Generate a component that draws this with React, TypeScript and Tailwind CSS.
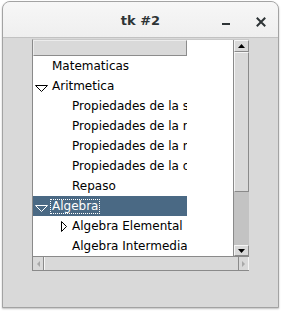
import React from "react";

type Row = {
  label: string;
  indent: number; // text x offset relative to tree body left
  icon?: "down" | "right";
  selected?: boolean;
};

const rows: Row[] = [
  { label: "Matematicas", indent: 19 },
  { label: "Aritmetica", indent: 19, icon: "down" },
  { label: "Propiedades de la suma", indent: 39 },
  { label: "Propiedades de la resta", indent: 39 },
  { label: "Propiedades de la multiplicacion", indent: 39 },
  { label: "Propiedades de la division", indent: 39 },
  { label: "Repaso", indent: 39 },
  { label: "Algebra", indent: 19, icon: "down", selected: true },
  { label: "Algebra Elemental", indent: 39, icon: "right" },
  { label: "Algebra Intermedia", indent: 39 },
];

function Indicator({ kind, color }: { kind: "down" | "right"; color: string }) {
  if (kind === "down") {
    return (
      <svg width="14" height="8" viewBox="0 0 14 8" className="absolute left-[2px] top-[9px]">
        <path d="M0.5 0.5 L12.5 0.5 L6.5 6.5 Z" fill="none" stroke={color} strokeWidth="1" />
      </svg>
    );
  }
  return (
    <svg width="8" height="12" viewBox="0 0 8 12" className="absolute left-[28px] top-[5px]">
      <path d="M0.5 0.5 L0.5 10.5 L5.5 5.5 Z" fill="none" stroke={color} strokeWidth="1" />
    </svg>
  );
}

export default function App() {
  return (
    <div className="w-[281px] h-[311px] bg-white overflow-hidden font-['DejaVu_Sans',sans-serif] text-[12px] text-black">
      <div className="ml-[2px] mt-[1px] w-[277px] h-[307px] flex flex-col rounded-t-[8px] border border-[#a3a3a3] bg-[#d9d9d9] overflow-hidden shadow-[0_1px_2px_rgba(0,0,0,0.25)]">
        {/* Title bar */}
        <div className="h-[36px] shrink-0 flex items-center relative bg-gradient-to-b from-[#f7f7f7] to-[#efefef] border-b border-[#c2c2c2]">
          <div className="absolute left-0 right-0 top-[11px] text-center font-bold text-[13px] text-[#2e3436] leading-[16px]">
            tk #2
          </div>
          <div className="absolute left-[219px] top-[21px] w-[8px] h-[2px] bg-[#2e3436]" />
          <svg className="absolute left-[253px] top-[15px]" width="10" height="10" viewBox="0 0 10 10">
            <path d="M1.5 1.5 L8.5 8.5 M8.5 1.5 L1.5 8.5" stroke="#2e3436" strokeWidth="2" strokeLinecap="square" />
          </svg>
        </div>

        {/* Content */}
        <div className="flex-1 pl-[29px] pt-[1px]">
          <div className="w-[217px] flex flex-col border-l border-t border-l-[#8a8a8a] border-t-[#c9c9c9]">
            <div className="flex h-[216px]">
              {/* Tree body */}
              <div className="w-[200px] bg-white flex flex-col overflow-hidden">
                <div className="flex h-[16px] shrink-0">
                  <div className="w-[154px] h-[16px] bg-[#d9d9d9] border-t border-l border-t-[#ececec] border-l-[#ececec] border-r border-b border-r-[#8c8c8c] border-b-[#8c8c8c]" />
                </div>
                {rows.map((r, i) => (
                  <div
                    key={i}
                    className={`relative w-[154px] h-[20px] shrink-0 overflow-hidden ${r.selected ? "bg-[#4a6984] text-white" : ""}`}
                  >
                    {r.icon && (
                      <Indicator kind={r.icon} color={r.selected ? "#ffffff" : "#000000"} />
                    )}
                    <div
                      className="absolute top-0 h-[20px] leading-[20px] whitespace-nowrap"
                      style={{ left: r.indent }}
                    >
                      {r.selected ? (
                        <span className="inline-block leading-[13px] px-[1px] outline outline-1 outline-dotted outline-[#ffffff] -ml-[1px]">
                          {r.label}
                        </span>
                      ) : (
                        r.label
                      )}
                    </div>
                  </div>
                ))}
              </div>
              {/* Vertical scrollbar */}
              <div className="w-[16px] flex flex-col border-l border-[#8a8a8a] bg-[#c3c3c3]">
                <div className="h-[12px] shrink-0 bg-[#d9d9d9] border-t border-l border-t-[#f5f5f5] border-l-[#f5f5f5] border-r border-b border-r-[#8a8a8a] border-b-[#8a8a8a] flex items-center justify-center">
                  <svg width="7" height="4" viewBox="0 0 7 4">
                    <path d="M0 4 L7 4 L3.5 0 Z" fill="#000" />
                  </svg>
                </div>
                <div className="h-[140px] shrink-0 bg-[#d9d9d9] border-t border-l border-t-[#f5f5f5] border-l-[#f5f5f5] border-r border-b border-r-[#8a8a8a] border-b-[#8a8a8a]" />
                <div className="flex-1" />
                <div className="h-[11px] shrink-0 bg-[#d9d9d9] border-t border-l border-t-[#f5f5f5] border-l-[#f5f5f5] border-r border-b border-r-[#8a8a8a] border-b-[#8a8a8a] flex items-center justify-center">
                  <svg width="7" height="4" viewBox="0 0 7 4">
                    <path d="M0 0 L7 0 L3.5 4 Z" fill="#000" />
                  </svg>
                </div>
              </div>
            </div>
            {/* Horizontal scrollbar */}
            <div className="h-[15px] flex border-t border-b border-t-[#8a8a8a] border-b-[#8a8a8a] bg-[#d9d9d9]">
              <div className="w-[11px] border-r border-[#8a8a8a] flex items-center justify-center">
                <svg width="3" height="6" viewBox="0 0 3 6">
                  <path d="M3 0 L3 6 L0 3 Z" fill="#a8a8a8" />
                </svg>
              </div>
              <div className="flex-1 border-l border-[#f5f5f5]" />
              <div className="w-[11px] border-l border-[#8a8a8a] border-r border-r-[#f5f5f5] flex items-center justify-center">
                <svg width="3" height="6" viewBox="0 0 3 6">
                  <path d="M0 0 L0 6 L3 3 Z" fill="#a8a8a8" />
                </svg>
              </div>
            </div>
          </div>
        </div>
      </div>
    </div>
  );
}
